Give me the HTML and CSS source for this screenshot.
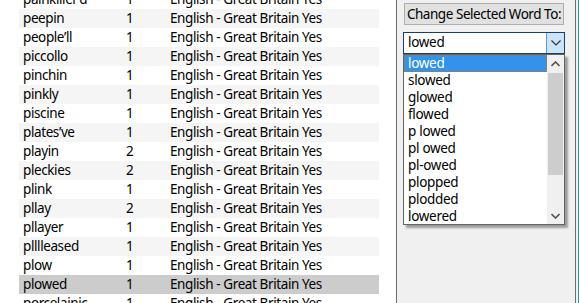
FILE: index.html
```html
<!DOCTYPE html>
<html lang="en">
<head>
  <meta charset="UTF-8">
  <title>Spelling words</title>
  <link rel="stylesheet" href="styles.css">
</head>
<body>

<div class="ventana">
  <div class="lista">
    <div class="filas">
      <div class="fila"><span>painkiller’d</span><span>1</span><span>English - Great Britain</span><span>Yes</span></div>
      <div class="fila par"><span>peepin</span><span>1</span><span>English - Great Britain</span><span>Yes</span></div>
      <div class="fila"><span>people’ll</span><span>1</span><span>English - Great Britain</span><span>Yes</span></div>
      <div class="fila par"><span>piccollo</span><span>1</span><span>English - Great Britain</span><span>Yes</span></div>
      <div class="fila"><span>pinchin</span><span>1</span><span>English - Great Britain</span><span>Yes</span></div>
      <div class="fila par"><span>pinkly</span><span>1</span><span>English - Great Britain</span><span>Yes</span></div>
      <div class="fila"><span>piscine</span><span>1</span><span>English - Great Britain</span><span>Yes</span></div>
      <div class="fila par"><span>plates’ve</span><span>1</span><span>English - Great Britain</span><span>Yes</span></div>
      <div class="fila"><span>playin</span><span>2</span><span>English - Great Britain</span><span>Yes</span></div>
      <div class="fila par"><span>pleckies</span><span>2</span><span>English - Great Britain</span><span>Yes</span></div>
      <div class="fila"><span>plink</span><span>1</span><span>English - Great Britain</span><span>Yes</span></div>
      <div class="fila par"><span>pllay</span><span>2</span><span>English - Great Britain</span><span>Yes</span></div>
      <div class="fila"><span>pllayer</span><span>1</span><span>English - Great Britain</span><span>Yes</span></div>
      <div class="fila par"><span>plllleased</span><span>1</span><span>English - Great Britain</span><span>Yes</span></div>
      <div class="fila"><span>plow</span><span>1</span><span>English - Great Britain</span><span>Yes</span></div>
      <div class="fila elegida"><span>plowed</span><span>1</span><span>English - Great Britain</span><span>Yes</span></div>
      <div class="fila"><span>porcelainic</span><span>1</span><span>English - Great Britain</span><span>Yes</span></div>
    </div>
  </div>

  <div class="panel">
    <button class="boton">Change Selected Word To:</button>

    <div class="combo">
      <span class="combo-texto">lowed</span>
      <span class="combo-flecha">
        <svg width="10" height="6" viewBox="0 0 10 6"><path d="M0.5 0.5 L5 5 L9.5 0.5" fill="none" stroke="#333" stroke-width="1.2"/></svg>
      </span>
    </div>

    <div class="desplegable">
      <div class="opciones">
        <div class="opcion activa">lowed</div>
        <div class="opcion">slowed</div>
        <div class="opcion">glowed</div>
        <div class="opcion">flowed</div>
        <div class="opcion">p lowed</div>
        <div class="opcion">pl owed</div>
        <div class="opcion">pl-owed</div>
        <div class="opcion">plopped</div>
        <div class="opcion">plodded</div>
        <div class="opcion">lowered</div>
      </div>
      <div class="barra">
        <div class="barra-boton">
          <svg width="9" height="6" viewBox="0 0 9 6"><path d="M0.5 5 L4.5 1 L8.5 5" fill="none" stroke="#555" stroke-width="1.6"/></svg>
        </div>
        <div class="barra-pista"><div class="barra-pulgar"></div></div>
        <div class="barra-boton">
          <svg width="9" height="6" viewBox="0 0 9 6"><path d="M0.5 1 L4.5 5 L8.5 1" fill="none" stroke="#555" stroke-width="1.6"/></svg>
        </div>
      </div>
    </div>
  </div>
</div>

</body>
</html>
```

FILE: styles.css
```css
body {
  margin: 0;
  font-family: "Noto Sans", "Open Sans", sans-serif;
  font-size: 13.5px;
  letter-spacing: -0.3px;
  color: #000;
  overflow: hidden;
}
.ventana {
  display: flex;
  width: 579px;
  height: 303px;
  box-sizing: border-box;
  background: #f0f0f0;
  border-right: 1px solid #1e9aa0;
}
.lista {
  flex-shrink: 0;
  width: 396px;
  height: 303px;
  background: white;
  overflow: hidden;
}
.filas {
  margin-top: -10px;
  margin-left: 19px;
  width: 360px;
}
.fila {
  display: grid;
  grid-template-columns: 103px 44px 132px 81px;
  height: 19px;
  line-height: 19px;
  letter-spacing: -0.4px;
}
.fila span { padding-left: 4px; white-space: nowrap; }
.fila.par { background: #f5f5f5; }
.fila.elegida { background: #cccccc; }

.panel {
  position: relative;
  flex-shrink: 0;
  width: 180px;
  box-sizing: border-box;
  margin-right: 2px;
  border-left: 1px solid #6d6d6d;
  border-right: 1px solid #6d6d6d;
  padding: 3px 0 0 6px;
}
.boton {
  display: block;
  margin-left: 1px;
  width: 160px;
  height: 22px;
  padding: 0;
  border: 1px solid #adadad;
  background: #e1e1e1;
  font-family: inherit;
  font-size: 13.5px;
  letter-spacing: -0.45px;
  white-space: nowrap;
  color: #000;
  line-height: 19px;
}
.combo {
  display: flex;
  margin-top: 7px;
  width: 162px;
  height: 22px;
  box-sizing: border-box;
  border: 1px solid #1a3e6e;
  background: white;
}
.combo-texto {
  flex: 1;
  padding-left: 4px;
  line-height: 19px;
}
.combo-flecha {
  width: 17px;
  background: #cce4f7;
  border-left: 1px solid #5a9ee0;
  display: flex;
  align-items: center;
  justify-content: center;
}
.desplegable {
  position: absolute;
  top: 54px;
  left: 6px;
  width: 162px;
  height: 171px;
  box-sizing: border-box;
  border: 1px solid #646464;
  background: white;
  display: flex;
  box-shadow: 3px 3px 2px rgba(0, 0, 0, 0.35);
}
.opciones { flex: 1; }
.opcion {
  height: 17px;
  line-height: 16px;
  padding-left: 4px;
}
.opcion.activa {
  background: #3393ea;
  color: white;
  outline: 1px dotted #cc6c15;
  outline-offset: -1px;
}
.barra {
  width: 17px;
  background: #f0f0f0;
  display: flex;
  flex-direction: column;
}
.barra-boton {
  height: 17px;
  display: flex;
  align-items: center;
  justify-content: center;
}
.barra-pista { flex: 1; }
.barra-pulgar {
  margin: 1px 1px 0 1px;
  height: 102px;
  background: #cdcdcd;
}
```
